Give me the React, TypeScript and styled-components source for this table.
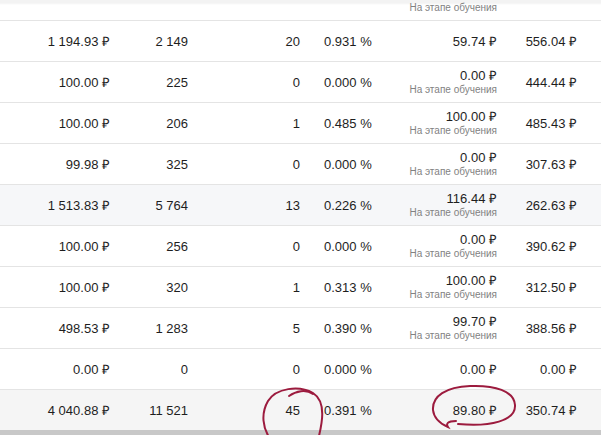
import React from "react";
import styled, { createGlobalStyle } from "styled-components";

const GlobalStyle = createGlobalStyle`
  html, body {
    margin: 0;
    padding: 0;
    background: #fff;
  }
  body {
    font-family: "Liberation Sans", Arial, sans-serif;
  }
`;

const Viewport = styled.div`
  position: relative;
  width: 601px;
  height: 435px;
  overflow: hidden;
  background: #fff;
  display: flex;
  flex-direction: column;
`;

const TableWrap = styled.div`
  flex: 1;
  overflow: hidden;
`;

const Table = styled.table`
  width: 601px;
  margin-top: -20px;
  border-collapse: collapse;
  table-layout: fixed;
  font-size: 13px;
  color: #1e1e1e;
`;

const Row = styled.tr<{ $tone?: "plain" | "hover" | "total" | "cut" }>`
  background: ${({ $tone }) =>
    $tone === "hover"
      ? "#f6f7f9"
      : $tone === "total"
      ? "#f5f5f5"
      : $tone === "cut"
      ? "linear-gradient(to bottom, #fff 0, #fff 19px, #f3f3f3 20px, #f3f3f3 23px, #fff 25px)"
      : "#fff"};
  border-bottom: ${({ $tone }) => ($tone === "total" ? "none" : "1px solid #e4e4e4")};
`;

const Cell = styled.td<{ $align?: "left" | "right" }>`
  height: 40px;
  padding: 0 12px;
  text-align: ${({ $align }) => $align || "right"};
  white-space: nowrap;
  vertical-align: middle;
  line-height: 15px;
`;

const Stack = styled.div`
  display: flex;
  flex-direction: column;
  align-items: flex-end;
`;

const Note = styled.span`
  font-size: 10px;
  line-height: 14px;
  color: #828282;
`;

const Scrollbar = styled.div`
  height: 5px;
  background: #c8c8c8;
`;

const Marks = styled.svg`
  position: absolute;
  left: 0;
  top: 0;
  pointer-events: none;
`;

type Line = {
  spent: string;
  clicks: string;
  conv: string;
  rate: string;
  cpa: string;
  learning?: boolean;
  cpc: string;
  tone?: "plain" | "hover" | "total";
};

const lines: Line[] = [
  { spent: "1 194.93 ₽", clicks: "2 149", conv: "20", rate: "0.931 %", cpa: "59.74 ₽", cpc: "556.04 ₽" },
  { spent: "100.00 ₽", clicks: "225", conv: "0", rate: "0.000 %", cpa: "0.00 ₽", learning: true, cpc: "444.44 ₽" },
  { spent: "100.00 ₽", clicks: "206", conv: "1", rate: "0.485 %", cpa: "100.00 ₽", learning: true, cpc: "485.43 ₽" },
  { spent: "99.98 ₽", clicks: "325", conv: "0", rate: "0.000 %", cpa: "0.00 ₽", learning: true, cpc: "307.63 ₽" },
  { spent: "1 513.83 ₽", clicks: "5 764", conv: "13", rate: "0.226 %", cpa: "116.44 ₽", learning: true, cpc: "262.63 ₽", tone: "hover" },
  { spent: "100.00 ₽", clicks: "256", conv: "0", rate: "0.000 %", cpa: "0.00 ₽", learning: true, cpc: "390.62 ₽" },
  { spent: "100.00 ₽", clicks: "320", conv: "1", rate: "0.313 %", cpa: "100.00 ₽", learning: true, cpc: "312.50 ₽" },
  { spent: "498.53 ₽", clicks: "1 283", conv: "5", rate: "0.390 %", cpa: "99.70 ₽", learning: true, cpc: "388.56 ₽" },
  { spent: "0.00 ₽", clicks: "0", conv: "0", rate: "0.000 %", cpa: "0.00 ₽", cpc: "0.00 ₽" },
  { spent: "4 040.88 ₽", clicks: "11 521", conv: "45", rate: "0.391 %", cpa: "89.80 ₽", cpc: "350.74 ₽", tone: "total" },
];

const LEARNING = "На этапе обучения";

export default function App() {
  return (
    <>
      <GlobalStyle />
      <Viewport>
        <TableWrap>
          <Table>
            <colgroup>
              <col style={{ width: 122 }} />
              <col style={{ width: 78 }} />
              <col style={{ width: 112 }} />
              <col style={{ width: 71 }} />
              <col style={{ width: 126 }} />
              <col style={{ width: 80 }} />
              <col style={{ width: 12 }} />
            </colgroup>
            <tbody>
              <Row $tone="cut">
                <Cell />
                <Cell />
                <Cell />
                <Cell />
                <Cell>
                  <Stack>
                    <span>&nbsp;</span>
                    <Note>{LEARNING}</Note>
                  </Stack>
                </Cell>
                <Cell />
                <Cell />
              </Row>
              {lines.map((l, i) => (
                <Row key={i} $tone={l.tone}>
                  <Cell>{l.spent}</Cell>
                  <Cell>{l.clicks}</Cell>
                  <Cell>{l.conv}</Cell>
                  <Cell>{l.rate}</Cell>
                  <Cell>
                    {l.learning ? (
                      <Stack>
                        <span>{l.cpa}</span>
                        <Note>{LEARNING}</Note>
                      </Stack>
                    ) : (
                      l.cpa
                    )}
                  </Cell>
                  <Cell>{l.cpc}</Cell>
                  <Cell />
                </Row>
              ))}
            </tbody>
          </Table>
        </TableWrap>
        <Scrollbar />
        <Marks width="601" height="435" viewBox="0 0 601 435">
          <g fill="none" stroke="#9c1b3e" strokeWidth="2" strokeLinecap="round">
            <path d="M 318 440 C 322 424, 327 402, 313 393 C 299 385, 276 388, 268 401 C 261 413, 262 428, 271 440" />
            <path d="M 289 396 C 296 391, 306 389, 313 394" />
            <path d="M 458 424 C 490 427, 516 421, 515 405 C 514 391, 495 385, 470 386 C 446 387, 432 396, 433 410 C 434 419, 441 424, 448 427 C 446 424, 447 421, 456 421" />
          </g>
        </Marks>
      </Viewport>
    </>
  );
}
